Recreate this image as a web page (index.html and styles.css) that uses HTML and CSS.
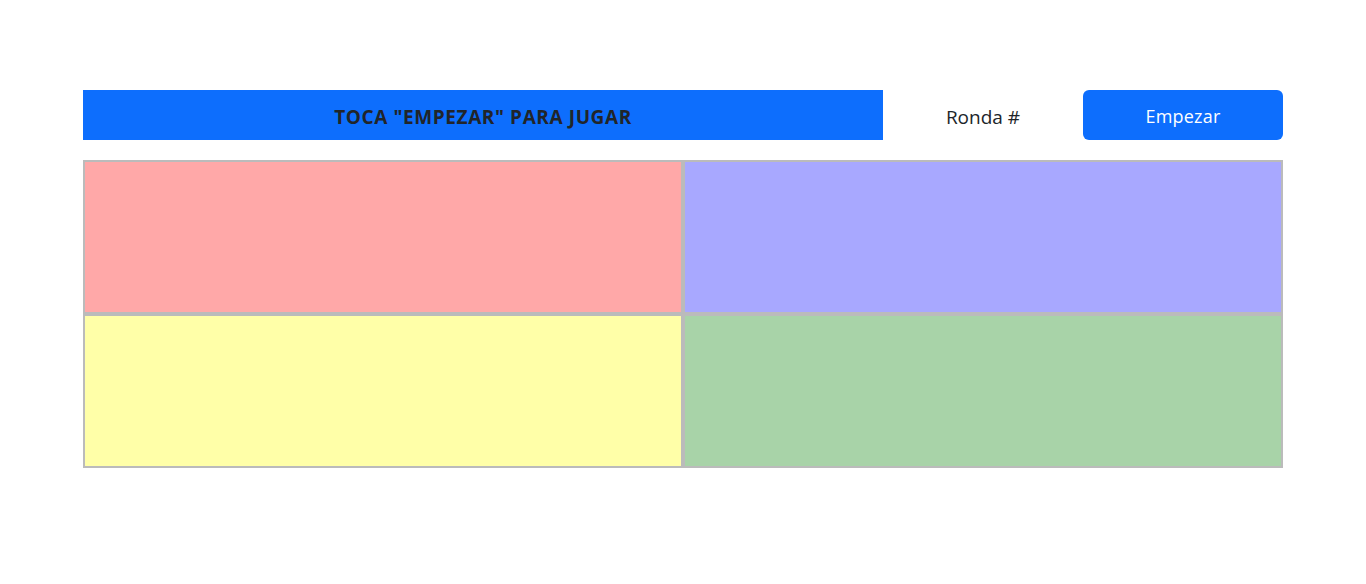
FILE: index.html
```html
<!DOCTYPE html>
<html lang="es">
<head>
    <meta charset="UTF-8">
    <meta name="viewport" content="width=device-width, initial-scale=1.0">
    <title>Simon</title>
    <link rel="stylesheet" href="styles.css">
</head>
<body>
    <div class="container">
        <div class="header">
            <div class="banner">TOCA "EMPEZAR" PARA JUGAR</div>
            <div class="round">Ronda #</div>
            <button class="start-btn">Empezar</button>
        </div>
        <div class="board">
            <div class="pad red"></div>
            <div class="pad blue"></div>
            <div class="pad yellow"></div>
            <div class="pad green"></div>
        </div>
    </div>
</body>
</html>
```

FILE: styles.css
```css
body {
    font-family: "Open Sans", "Noto Sans", sans-serif;
    color: #212529;
    background-color: #fff;
    margin: 0;
    padding: 0;
}

.container {
    width: 1200px;
    margin: 90px auto 0;
}

.header {
    display: flex;
    height: 50px;
    align-items: stretch;
}

.banner {
    width: 800px;
    padding-top: 3px;
    box-sizing: border-box;
    background-color: #0d6efd;
    font-size: 19px;
    font-weight: bold;
    letter-spacing: 0.6px;
    display: flex;
    align-items: center;
    justify-content: center;
}

.round {
    width: 200px;
    padding-top: 3px;
    box-sizing: border-box;
    font-size: 19px;
    display: flex;
    align-items: center;
    justify-content: center;
}

.start-btn {
    width: 200px;
    padding-top: 3px;
    background-color: #0d6efd;
    color: #fff;
    border: none;
    border-radius: 6px;
    font-family: inherit;
    font-size: 18px;
    letter-spacing: 0.2px;
    cursor: pointer;
}

.board {
    margin-top: 20px;
    display: grid;
    grid-template-columns: 600px 600px;
    grid-auto-rows: 154px;
}

.pad {
    border: 2px solid #bbb;
}

.red { background-color: #ffa8a8; }
.blue { background-color: #a8a8ff; }
.yellow { background-color: #ffffa8; }
.green { background-color: #a8d3a8; }
```
